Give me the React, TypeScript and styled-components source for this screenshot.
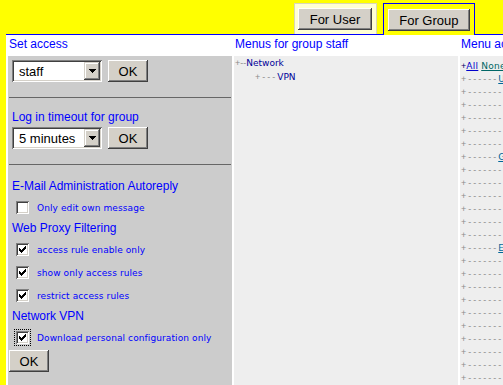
import React from "react";
import styled, { createGlobalStyle } from "styled-components";

const GlobalStyle = createGlobalStyle`
	html, body {
		margin: 0;
		padding: 0;
		overflow: hidden;
	}

	body {
		background: #ffff00;
		font-family: "Liberation Sans", Arial, sans-serif;
	}
`;

const menuRows = [
	{ link: "Users" },
	{}, {}, {}, {}, {},
	{ link: "Groups" },
	{}, {}, {}, {}, {}, {},
	{ link: "E-Mail" },
	{}, {}, {}, {}, {}, {}, {}, {}, {}, {}, {},
] as { link?: string }[];

const Checkmark = () => (
	<svg width="7" height="7" viewBox="0 0 7 7" shapeRendering="crispEdges">
		<path
			d="M0 2h1v3H0z M1 3h1v3H1z M2 4h1v3H2z M3 3h1v3H3z M4 2h1v3H4z M5 1h1v3H5z M6 0h1v3H6z"
			fill="#000"
		/>
	</svg>
);

const ArrowDown = () => (
	<svg width="7" height="4" viewBox="0 0 7 4" shapeRendering="crispEdges">
		<path d="M0 0h7v1H0z M1 1h5v1H1z M2 2h3v1H2z M3 3h1v1H3z" fill="#000" />
	</svg>
);

const CheckOption = ({
	label,
	checked,
	focused,
}: {
	label: string;
	checked?: boolean;
	focused?: boolean;
}) => (
	<CheckRow>
		<CheckBox $focused={focused}>{checked && <Checkmark />}</CheckBox>
		<CheckLabel>{label}</CheckLabel>
	</CheckRow>
);

const Dropdown = ({ value }: { value: string }) => (
	<SelectBox>
		<SelectValue>{value}</SelectValue>
		<ArrowButton>
			<ArrowDown />
		</ArrowButton>
	</SelectBox>
);

export default function App() {
	return (
		<Page>
			<GlobalStyle />
			<TabBar>
				<Tab>
					<Button>For User</Button>
				</Tab>
				<Tab $active>
					<Button>For Group</Button>
				</Tab>
			</TabBar>
			<Content>
				<Column>
					<ColumnTitle>Set access</ColumnTitle>
					<SettingsPanel>
						<FormRow>
							<Dropdown value="staff" />
							<OkButton>OK</OkButton>
						</FormRow>
						<Rule />
						<Heading>Log in timeout for group</Heading>
						<FormRow>
							<Dropdown value="5 minutes" />
							<OkButton>OK</OkButton>
						</FormRow>
						<Rule />
						<Heading $top={2}>E-Mail Administration Autoreply</Heading>
						<CheckOption label="Only edit own message" />
						<Heading>Web Proxy Filtering</Heading>
						<CheckOption label="access rule enable only" checked />
						<CheckOption label="show only access rules" checked />
						<CheckOption label="restrict access rules" checked />
						<Heading>Network VPN</Heading>
						<CheckOption
							label="Download personal configuration only"
							checked
							focused
						/>
						<SubmitRow>
							<OkButton>OK</OkButton>
						</SubmitRow>
					</SettingsPanel>
				</Column>
				<Column>
					<ColumnTitle>Menus for group staff</ColumnTitle>
					<TreePanel>
						<TreeRow>
							<Connector>+--</Connector>
							<TreeItem>Network</TreeItem>
						</TreeRow>
						<TreeRow $indent={20}>
							<Connector $wide>+---</Connector>
							<TreeItem>VPN</TreeItem>
						</TreeRow>
					</TreePanel>
				</Column>
				<Column>
					<ColumnTitle>Menu access rights</ColumnTitle>
					<MenuPanel>
						<MenuRow>
							<Plus>+</Plus>
							<MenuLink $color="#0000cc">All</MenuLink>{" "}
							<MenuLink $color="#006666">None</MenuLink>
						</MenuRow>
						{menuRows.map((row, i) => (
							<MenuRow key={i}>
								<Connector $wide>
									{row.link ? "+------" : "+--------------"}
								</Connector>
								{row.link && <MenuLink $color="#006699">{row.link}</MenuLink>}
							</MenuRow>
						))}
					</MenuPanel>
				</Column>
			</Content>
		</Page>
	);
}

const Page = styled.div`
	width: 503px;
	height: 385px;
	overflow: hidden;
`;

const TabBar = styled.div`
	display: flex;
	justify-content: flex-end;
	align-items: flex-end;
	gap: 6px;
	height: 34px;
	margin-left: 6px;
	padding-right: 28px;
	border-bottom: 1px solid #0000ff;
`;

const Tab = styled.div<{ $active?: boolean }>`
	display: flex;
	box-sizing: border-box;
	height: ${(p) => (p.$active ? "32px" : "31px")};
	margin-bottom: ${(p) => (p.$active ? "-1px" : "0")};
	padding: ${(p) => (p.$active ? "5px 4px 4px" : "4px 4px 3px 3px")};
	background: ${(p) => (p.$active ? "#ffff00" : "#ffffd4")};
	border: 1px solid ${(p) => (p.$active ? "#0000ff" : "#d9d7b8")};
	border-bottom: none;
	position: relative;
`;

const Button = styled.div`
	height: 22px;
	padding: 0 11.5px;
	display: flex;
	align-items: center;
	justify-content: center;
	background: #d4d0c8;
	color: #000;
	font-size: 13px;
	white-space: nowrap;
	box-shadow: inset -1px -1px #404040, inset 1px 1px #ffffff,
		inset -2px -2px #808080, inset 2px 2px #d4d0c8;
`;

const OkButton = styled(Button)`
	width: 40px;
	padding: 0;
	box-sizing: border-box;
`;

const Content = styled.div`
	display: grid;
	grid-template-columns: 224px 224px minmax(0, 1fr);
	column-gap: 2px;
	height: 420px;
	margin-left: 6px;
	padding: 2px 0 0 2px;
	background: #ffffff;
`;

const Column = styled.div`
	display: flex;
	flex-direction: column;
	min-width: 0;
`;

const ColumnTitle = styled.div`
	height: 19px;
	padding-left: 1px;
	color: #0000ff;
	font-size: 12px;
	line-height: 14px;
	white-space: nowrap;
	overflow: hidden;
`;

const SettingsPanel = styled.div`
	flex: 1;
	display: flex;
	flex-direction: column;
	padding: 4px 1px;
	background: #cccccc;
`;

const FormRow = styled.div`
	display: flex;
	gap: 6px;
	margin-left: 3px;
`;

const SelectBox = styled.div`
	display: flex;
	align-items: center;
	box-sizing: border-box;
	width: 90px;
	height: 22px;
	padding: 2px;
	background: #ffffff;
	font-size: 13px;
	color: #000;
	box-shadow: inset 1px 1px #808080, inset -1px -1px #ffffff,
		inset 2px 2px #404040, inset -2px -2px #d4d0c8;
`;

const SelectValue = styled.span`
	flex: 1;
	padding-left: 5px;
	white-space: nowrap;
`;

const ArrowButton = styled.span`
	display: flex;
	align-items: center;
	justify-content: center;
	width: 16px;
	height: 18px;
	background: #d4d0c8;
	box-shadow: inset -1px -1px #404040, inset 1px 1px #d4d0c8,
		inset -2px -2px #808080, inset 2px 2px #ffffff;
`;

const Rule = styled.div`
	height: 0;
	margin: 15px 0 10px;
	border-top: 1px solid #666666;
`;

const Heading = styled.div<{ $top?: number }>`
	margin-top: ${(p) => p.$top ?? 0}px;
	padding: 2px 0 3px 3px;
	color: #0000ff;
	font-size: 12px;
	line-height: 14px;
	white-space: nowrap;
`;

const CheckRow = styled.div`
	display: flex;
	align-items: center;
	gap: 8px;
	height: 23px;
	padding-left: 7px;
`;

const CheckBox = styled.span<{ $focused?: boolean }>`
	display: flex;
	align-items: center;
	justify-content: center;
	width: 13px;
	height: 13px;
	flex: none;
	background: #ffffff;
	box-shadow: inset 1px 1px #808080, inset -1px -1px #ffffff,
		inset 2px 2px #404040, inset -2px -2px #d4d0c8;
	outline: ${(p) => (p.$focused ? "1px dotted #000" : "none")};
	outline-offset: 1px;
`;

const CheckLabel = styled.span`
	color: #0000ff;
	font-family: "DejaVu Sans", Verdana, sans-serif;
	font-size: 9px;
	letter-spacing: 0.1px;
	white-space: nowrap;
`;

const SubmitRow = styled.div`
	display: flex;
	margin-top: 1px;
`;

const TreePanel = styled.div`
	flex: 1;
	padding: 0 1px;
	background: #eeeeee;
	font-size: 9px;
	line-height: 14px;
`;

const TreeRow = styled.div<{ $indent?: number }>`
	padding-left: ${(p) => p.$indent ?? 0}px;
	white-space: nowrap;
`;

const Connector = styled.span<{ $wide?: boolean }>`
	color: #8c8c8c;
	font-family: "Liberation Sans", Arial, sans-serif;
	font-size: 9px;
	letter-spacing: ${(p) => (p.$wide ? "2px" : "0")};
`;

const TreeItem = styled.span`
	color: #000099;
	font-family: "DejaVu Sans", Verdana, sans-serif;
	font-size: 9px;
`;

const MenuPanel = styled.div`
	flex: 1;
	padding: 4px 0 0 1px;
	background: #eeeeee;
	font-size: 9px;
	line-height: 13px;
	overflow: hidden;
`;

const MenuRow = styled.div`
	white-space: nowrap;
	font-family: "DejaVu Sans", Verdana, sans-serif;
	font-size: 9px;
`;

const Plus = styled.span`
	color: #000066;
	font-family: "Liberation Sans", Arial, sans-serif;
	font-size: 9px;
`;

const MenuLink = styled.span<{ $color: string }>`
	color: ${(p) => p.$color};
	text-decoration: underline;
	letter-spacing: 0.3px;
`;
